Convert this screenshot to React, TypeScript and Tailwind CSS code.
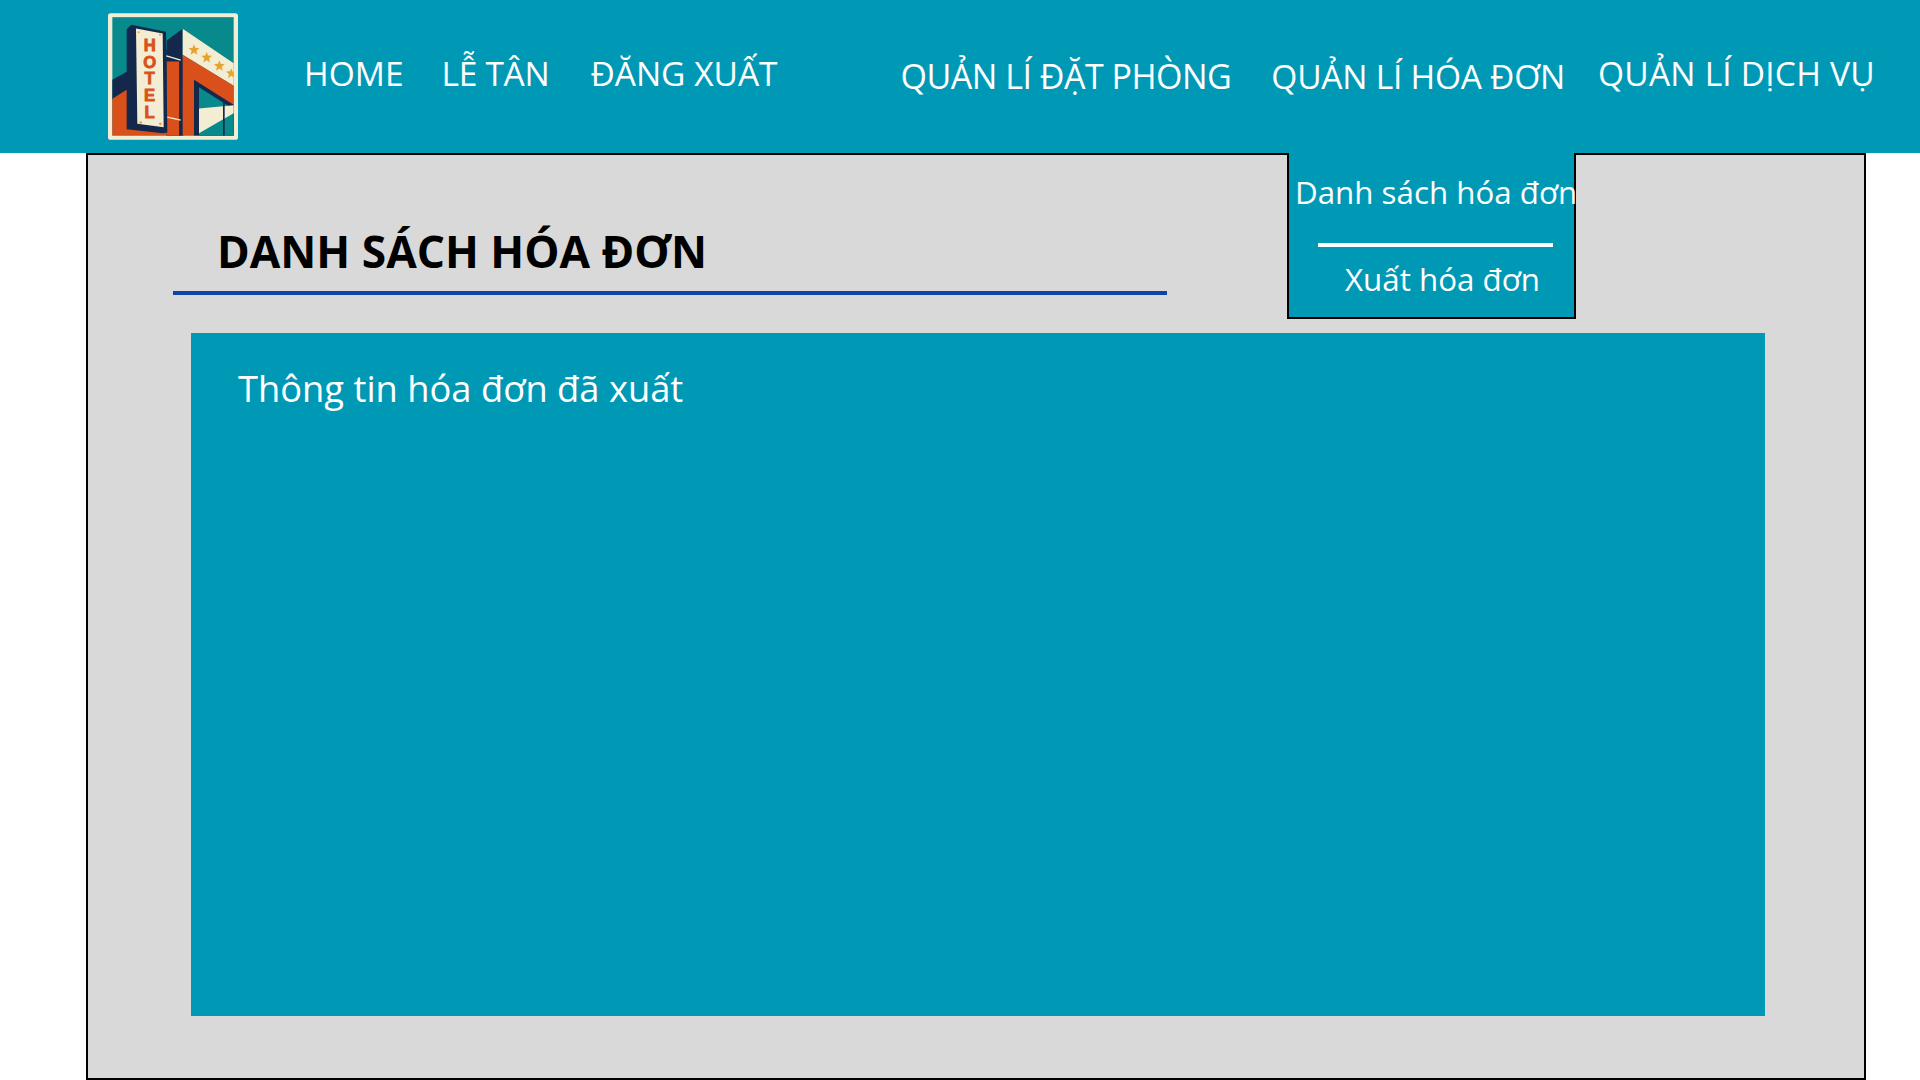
const navLeft = [
  { label: "HOME", className: "ml-[66px] text-[33.5px]" },
  { label: "LỄ TÂN", className: "ml-[38px] text-[33.5px] tracking-[-0.3px]" },
  { label: "ĐĂNG XUẤT", className: "ml-[41px] text-[33.5px]" },
];

const navRight = [
  { label: "QUẢN LÍ ĐẶT PHÒNG", className: "ml-[123px] mt-[6px] text-[34px] tracking-[-0.5px]" },
  { label: "QUẢN LÍ HÓA ĐƠN", className: "ml-[40px] mt-[6px] text-[33.5px] tracking-[-0.25px]" },
  { label: "QUẢN LÍ DỊCH VỤ", className: "ml-[33px] text-[33.5px] tracking-[0.2px]" },
];

function HotelLogo() {
  return (
    <svg viewBox="54 40 390 380" className="h-[127px] w-[130px] shrink-0">
      <rect x="54" y="40" width="390" height="380" rx="8" fill="#f3edd4" />
      <rect x="67" y="52" width="364" height="355" fill="#08898b" />
      <path d="M67 240 L230 150 L230 300 L67 300 Z" fill="#14284c" />
      <path d="M67 297 L110 270 L230 300 L270 407 L67 407 Z" fill="#d9501b" />
      <path d="M230 122 L278 87 L278 407 L230 407 Z" fill="#14284c" />
      <path d="M230 185 L268 185 L268 407 L230 407 Z" fill="#d9501b" />
      <path d="M268 180 L281 170 L281 407 L268 407 Z" fill="#14284c" />
      <path d="M278 87 L431 190 L431 258 L278 165 Z" fill="#f3edd4" />
      <path d="M278 165 L431 258 L431 407 L278 407 Z" fill="#d9501b" />
      <path d="M312 240 L431 315 L431 407 L312 407 Z" fill="#14284c" />
      <path d="M327 262 L431 328 L431 407 L327 407 Z" fill="#08898b" />
      <path d="M327 326 L431 316 L431 340 L327 400 Z" fill="#f3edd4" />
      <rect x="399" y="300" width="5" height="107" fill="#14284c" />
      <path d="M110 88 L124 75 L228 96 L232 398 L218 400 L110 388 Z" fill="#14284c" />
      <path d="M138 86 L218 101 L221 382 L142 372 Z" fill="#f3edd4" />
      <text
        x="179"
        y="108"
        fill="#d9501b"
        stroke="#d9501b"
        strokeWidth="2.5"
        fontFamily="'Liberation Sans', sans-serif"
        fontWeight="700"
        fontSize="50"
        letterSpacing="-7"
        style={{ writingMode: "vertical-rl", textOrientation: "upright" }}
      >
        HOTEL
      </text>
      <g fill="#e6a32e">
        <circle cx="146" cy="97" r="3" />
        <circle cx="210" cy="105" r="3" />
        <circle cx="152" cy="368" r="4" />
        <circle cx="211" cy="372" r="4" />
      </g>
      <path d="M229 168 L272 181 M232 352 L272 361" stroke="#f3edd4" strokeWidth="4" />
      <g fill="#e6a32e">
        <path d="M312 133 l4 11 12 1 -9 8 3 12 -10 -7 -10 7 3 -12 -9 -8 12 -1 z" />
        <path d="M350 156 l4 11 12 1 -9 8 3 12 -10 -7 -10 7 3 -12 -9 -8 12 -1 z" />
        <path d="M388 181 l4 11 12 1 -9 8 3 12 -10 -7 -10 7 3 -12 -9 -8 12 -1 z" />
        <path d="M424 205 l4 11 3 0 0 17 -7 -5 -10 7 3 -12 -9 -8 12 -1 z" />
      </g>
    </svg>
  );
}

export default function App() {
  return (
    <div className="min-h-[1080px] bg-white font-['Open_Sans',sans-serif] text-white">
      <header className="flex h-[153px] items-center bg-[#0099b5] pl-[108px] whitespace-nowrap">
        <HotelLogo />
        <nav className="-mt-[7px] flex items-center font-normal">
          {navLeft.map((item) => (
            <a key={item.label} className={item.className}>
              {item.label}
            </a>
          ))}
          {navRight.map((item) => (
            <a key={item.label} className={item.className}>
              {item.label}
            </a>
          ))}
        </nav>
      </header>

      <main className="relative ml-[86px] h-[927px] w-[1780px] border-2 border-black bg-[#d9d9d9] px-[103px] pt-[67px]">
        <h1 className="pl-[26px] text-[44.3px] leading-[58px] font-bold whitespace-nowrap text-black">
          DANH SÁCH HÓA ĐƠN
        </h1>
        <div className="-ml-[18px] mt-[11px] h-[4px] w-[994px] bg-[#0b47a8]" />
        <section className="mt-[38px] h-[683px] w-[1574px] bg-[#0099b5] pt-[30px] pl-[47px]">
          <p className="text-[36.3px] leading-[50px] font-normal whitespace-nowrap">Thông tin hóa đơn đã xuất</p>
        </section>

        <div className="absolute -top-[2px] left-[1199px] h-[166px] w-[289px] border-x-2 border-b-2 border-black bg-[#0099b5] text-[31.3px] font-normal whitespace-nowrap">
          <p className="mt-[17px] ml-[6px] leading-[44px]">Danh sách hóa đơn</p>
          <div className="mt-[29px] ml-[29px] h-[4px] w-[235px] bg-white" />
          <p className="mt-[10px] ml-[56px] leading-[44px]">Xuất hóa đơn</p>
        </div>
      </main>
    </div>
  );
}
